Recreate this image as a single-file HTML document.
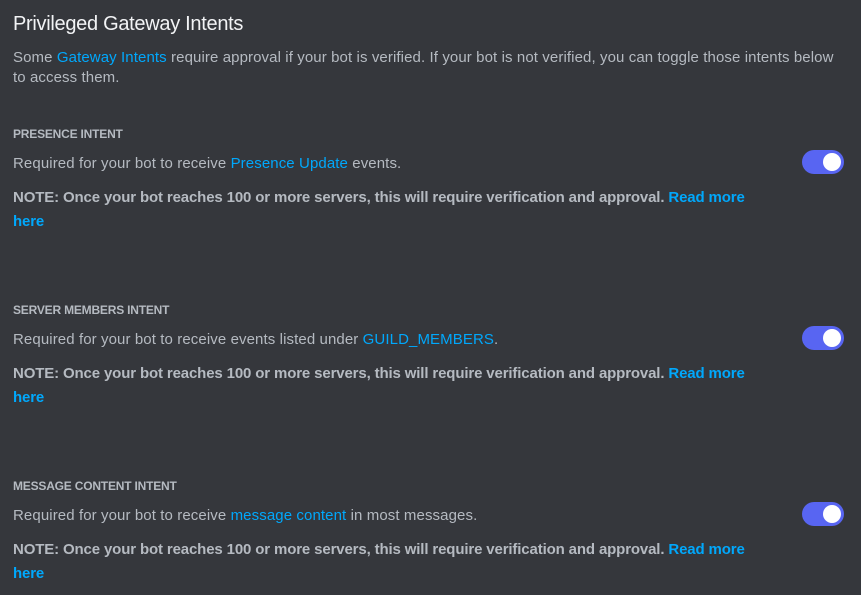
<!DOCTYPE html>
<html><head><meta charset="utf-8"><style>
html,body{margin:0;padding:0;background:#35373c;width:861px;height:595px;overflow:hidden;font-family:"Liberation Sans",sans-serif;color:#b5bac1}
.t{position:absolute;left:13px;top:13px;font-size:20px;color:#f2f3f5;white-space:nowrap;letter-spacing:-0.3px}
.p{position:absolute;left:13px;font-size:15px;white-space:nowrap;letter-spacing:0.1px}
.h{position:absolute;left:13px;font-size:12px;font-weight:bold;white-space:nowrap;letter-spacing:-0.2px}
.n{position:absolute;left:13px;font-size:15px;font-weight:bold;white-space:nowrap;letter-spacing:-0.14px;color:#b5bac1}
.a{color:#00a8fc}
.tg{position:absolute;left:802px;width:42px;height:24px;border-radius:12px;background:#5865f2}
.tg::after{content:"";position:absolute;right:3px;top:3px;width:18px;height:18px;border-radius:50%;background:#fff}
</style></head><body>
<div class="t">Privileged Gateway Intents</div>
<div class="p" style="top:49px">Some <span class="a">Gateway Intents</span> require approval if your bot is verified. If your bot is not verified, you can toggle those intents below</div>
<div class="p" style="top:69px">to access them.</div>

<div class="h" style="top:127px">PRESENCE INTENT</div>
<div class="p" style="top:155px">Required for your bot to receive <span class="a">Presence Update</span> events.</div>
<div class="tg" style="top:150px"></div>
<div class="n" style="top:189px">NOTE: Once your bot reaches 100 or more servers, this will require verification and approval. <span class="a">Read more</span></div>
<div class="n a" style="top:213px">here</div>

<div class="h" style="top:303px">SERVER MEMBERS INTENT</div>
<div class="p" style="top:331px">Required for your bot to receive events listed under <span class="a">GUILD_MEMBERS</span>.</div>
<div class="tg" style="top:326px"></div>
<div class="n" style="top:365px">NOTE: Once your bot reaches 100 or more servers, this will require verification and approval. <span class="a">Read more</span></div>
<div class="n a" style="top:389px">here</div>

<div class="h" style="top:479px">MESSAGE CONTENT INTENT</div>
<div class="p" style="top:507px">Required for your bot to receive <span class="a">message content</span> in most messages.</div>
<div class="tg" style="top:502px"></div>
<div class="n" style="top:541px">NOTE: Once your bot reaches 100 or more servers, this will require verification and approval. <span class="a">Read more</span></div>
<div class="n a" style="top:565px">here</div>
</body></html>
